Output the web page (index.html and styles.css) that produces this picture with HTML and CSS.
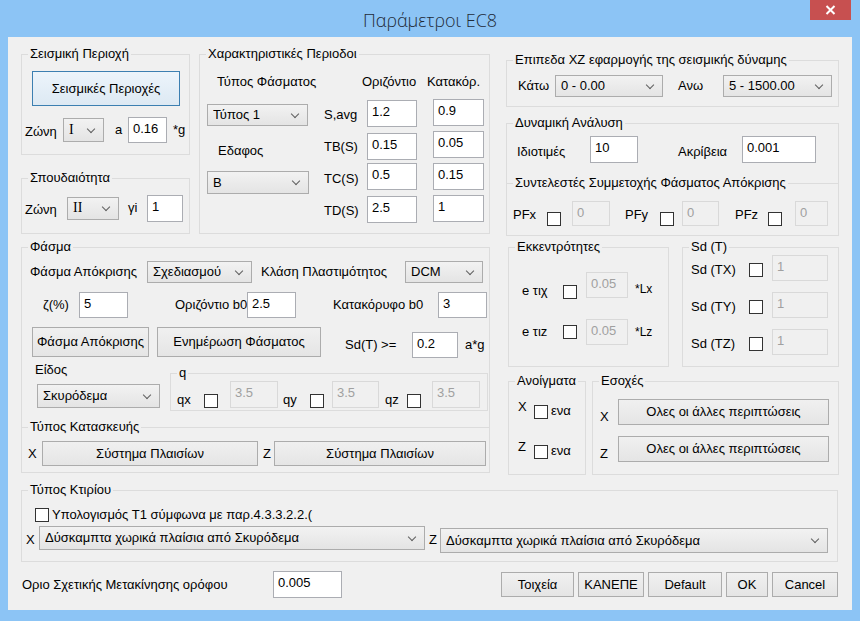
FILE: index.html
```html
<!DOCTYPE html>
<html lang="el">
<head>
<meta charset="utf-8">
<title>Παράμετροι EC8</title>
<link rel="stylesheet" href="styles.css">
</head>
<body>
<div class="window">
  <div class="titlebar">
    <div class="title">Παράμετροι EC8</div>
    <div class="close"><svg width="11" height="10" viewBox="0 0 11 10"><path d="M1.5 1 L9.5 9 M9.5 1 L1.5 9" stroke="#fff" stroke-width="2"/></svg></div>
  </div>
  <div class="client">
    <div class="upper">
      <div class="leftcol">
        <div class="row1">
          <div class="colA">
            <fieldset class="fs fs-seis">
              <legend>Σεισμική Περιοχή</legend>
              <div class="btn def w148 h35 btn-seis">Σεισμικές Περιοχές</div>
              <div class="r r-zoni1">
                <span class="pt4">Ζώνη</span>
                <div class="dd w41 h24 serif"><span>I</span></div>
                <span>a</span>
                <div class="tb w39 h26">0.16</div>
                <span class="ml3">*g</span>
              </div>
            </fieldset>
            <fieldset class="fs fs-spoud">
              <legend>Σπουδαιότητα</legend>
              <div class="r r-zoni2">
                <span class="pt4">Ζώνη</span>
                <div class="dd w52 h23 serif"><span>II</span></div>
                <span>γi</span>
                <div class="tb w36 h27">1</div>
              </div>
            </fieldset>
          </div>
          <fieldset class="fs fs-char">
            <legend>Χαρακτηριστικές Περιοδοι</legend>
            <div class="char-grid">
              <span class="hd pl10">Τύπος Φάσματος</span><span></span><span class="hd ml-5">Οριζόντιο</span><span class="hd ml-6">Κατακόρ.</span>
              <div class="dd w101 h22 as-e mb1"><span>Τύπος 1</span></div><span class="lb">S,avg</span><div class="tb w50 h27 mt1">1.2</div><div class="tb w51 h27">0.9</div>
              <span class="as-e pl11">Εδαφος</span><span class="lb">TB(S)</span><div class="tb w50 h27 mt2">0.15</div><div class="tb w51 h27">0.05</div>
              <div class="dd w102 h23 mt8 ovf"><span>B</span></div><span class="lb">TC(S)</span><div class="tb w50 h27">0.5</div><div class="tb w51 h27">0.15</div>
              <span></span><span class="lb">TD(S)</span><div class="tb w50 h27 mt1">2.5</div><div class="tb w51 h27">1</div>
            </div>
          </fieldset>
        </div>
        <fieldset class="fs fs-fasma">
          <legend>Φάσμα</legend>
          <div class="r r-f1">
            <span>Φάσμα Απόκρισης</span>
            <div class="dd w105 h22"><span>Σχεδιασμού</span></div>
            <span>Κλάση Πλαστιμότητος</span>
            <div class="dd w78 h22"><span>DCM</span></div>
          </div>
          <div class="r r-f2">
            <span>ζ(%)</span>
            <div class="tb w49 h26">5</div>
            <span>Οριζόντιο b0</span>
            <div class="tb w49 h26">2.5</div>
            <span>Κατακόρυφο b0</span>
            <div class="tb w49 h26">3</div>
          </div>
          <div class="r r-f3">
            <div class="btn w117 h30 as-s">Φάσμα Απόκρισης</div>
            <div class="btn w164 h30 as-s">Ενημέρωση Φάσματος</div>
            <span class="pt4">Sd(T) &gt;=</span>
            <div class="tb w46 h26 as-e">0.2</div>
            <span class="pt4">a*g</span>
          </div>
          <div class="r-f4">
            <div class="eidos">
              <span>Είδος</span>
              <div class="dd w123 h24"><span>Σκυρόδεμα</span></div>
            </div>
            <fieldset class="fs fs-q">
              <legend>q</legend>
              <div class="r r-q">
                <span>qx</span><div class="chk"></div><div class="tb dis w48 h27">3.5</div>
                <span>qy</span><div class="chk"></div><div class="tb dis w47 h27">3.5</div>
                <span>qz</span><div class="chk"></div><div class="tb dis w48 h27">3.5</div>
              </div>
            </fieldset>
          </div>
          <fieldset class="fs topline fs-kat">
            <legend>Τύπος Κατασκευής</legend>
            <div class="r r-kat">
              <span>X</span>
              <div class="btn w216 h25">Σύστημα Πλαισίων</div>
              <span>Z</span>
              <div class="btn w212 h25">Σύστημα Πλαισίων</div>
            </div>
          </fieldset>
        </fieldset>
      </div>
      <div class="rightcol">
        <fieldset class="fs fs-epip">
          <legend>Επιπεδα XZ εφαρμογής της σεισμικής δύναμης</legend>
          <div class="r r-e1">
            <span>Κάτω</span>
            <div class="dd w108 h22"><span>0 - 0.00</span></div>
            <span>Ανω</span>
            <div class="dd w109 h22"><span>5 - 1500.00</span></div>
          </div>
        </fieldset>
        <fieldset class="fs fs-dyn">
          <legend>Δυναμική Ανάλυση</legend>
          <div class="r r-d1">
            <span class="pt4">Ιδιοτιμές</span>
            <div class="tb w48 h27">10</div>
            <span class="pt4">Ακρίβεια</span>
            <div class="tb w74 h27">0.001</div>
          </div>
          <fieldset class="fs topline fs-pf">
            <legend>Συντελεστές Συμμετοχής Φάσματος Απόκρισης</legend>
            <div class="r r-pf">
              <span class="pb3">PFx</span><div class="chk"></div><div class="tb dis w38 h25">0</div>
              <span class="pb3">PFy</span><div class="chk"></div><div class="tb dis w37 h25">0</div>
              <span class="pb3">PFz</span><div class="chk"></div><div class="tb dis w33 h25">0</div>
            </div>
          </fieldset>
        </fieldset>
        <div class="rrow1">
          <fieldset class="fs fs-ekk">
            <legend>Εκκεντρότητες</legend>
            <div class="r r-k1">
              <span>e τιχ</span><div class="chk"></div><div class="tb dis w42 h26 as-s">0.05</div><span class="pb2 small">*Lx</span>
            </div>
            <div class="r r-k2">
              <span>e τιz</span><div class="chk"></div><div class="tb dis w42 h26">0.05</div><span class="small">*Lz</span>
            </div>
          </fieldset>
          <fieldset class="fs fs-sd">
            <legend>Sd (T)</legend>
            <div class="r r-s">
              <span class="pt3">Sd (TX)</span><div class="chk"></div><div class="tb dis w56 h26">1</div>
            </div>
            <div class="r r-s">
              <span class="pt3">Sd (TY)</span><div class="chk"></div><div class="tb dis w56 h26">1</div>
            </div>
            <div class="r r-s">
              <span class="pt3">Sd (TZ)</span><div class="chk"></div><div class="tb dis w56 h26">1</div>
            </div>
          </fieldset>
        </div>
        <div class="rrow2">
          <fieldset class="fs fs-an">
            <legend>Ανοίγματα</legend>
            <div class="r r-a">
              <span class="as-s">X</span><div class="chk"></div><span>ενα</span>
            </div>
            <div class="r r-a">
              <span class="as-s">Z</span><div class="chk"></div><span>ενα</span>
            </div>
          </fieldset>
          <fieldset class="fs fs-es">
            <legend>Εσοχές</legend>
            <div class="r r-es">
              <span>X</span><div class="btn w211 h26">Ολες οι άλλες περιπτώσεις</div>
            </div>
            <div class="r r-es">
              <span>Z</span><div class="btn w211 h26">Ολες οι άλλες περιπτώσεις</div>
            </div>
          </fieldset>
        </div>
      </div>
    </div>
    <fieldset class="fs fs-kt">
      <legend>Τύπος Κτιρίου</legend>
      <div class="r-kt1">
        <div class="chk"></div><span>Υπολογισμός Τ1 σύμφωνα με παρ.4.3.3.2.2.(</span>
      </div>
      <div class="r r-kt2">
        <span>X</span>
        <div class="dd w386 h24"><span>Δύσκαμπτα χωρικά πλαίσια από Σκυρόδεμα</span></div>
        <span>Z</span>
        <div class="dd w388 h25 mt2"><span>Δύσκαμπτα χωρικά πλαίσια από Σκυρόδεμα</span></div>
      </div>
    </fieldset>
    <div class="footer">
      <span class="foot-lbl">Οριο Σχετικής Μετακίνησης ορόφου</span>
      <div class="tb w69 h27">0.005</div>
      <div class="spacer"></div>
      <div class="btns">
        <div class="btn w73 h25">Τοιχεία</div>
        <div class="btn w66 h25">ΚΑΝΕΠΕ</div>
        <div class="btn w74 h25">Default</div>
        <div class="btn w42 h25">OK</div>
        <div class="btn w66 h25">Cancel</div>
      </div>
    </div>
  </div>
</div>
</body>
</html>
```

FILE: styles.css
```css
* { box-sizing: border-box; }
html, body { margin: 0; padding: 0; }
body {
  font-family: "Liberation Sans", Arial, sans-serif;
  font-size: 13px;
  line-height: 16px;
  color: #000;
  background: #8cc4f5;
}
.window {
  width: 860px;
  height: 621px;
  background: #8cc4f5;
  display: flex;
  flex-direction: column;
  overflow: hidden;
}
.titlebar {
  height: 37px;
  flex: none;
  display: grid;
  grid-template-columns: 1fr auto 1fr;
}
.title {
  grid-column: 2;
  font-family: "Open Sans", "Noto Sans", sans-serif;
  font-weight: 300;
  font-size: 18px;
  line-height: 22px;
  margin-top: 9px;
  color: #1f2b38;
}
.close {
  grid-column: 3;
  justify-self: end;
  width: 41px;
  height: 20px;
  margin-right: 9px;
  background: #c75050;
  display: flex;
  align-items: center;
  justify-content: center;
}
.client {
  margin: 0 8px;
  height: 573px;
  flex: none;
  background: #f0f0f0;
  padding: 0 13px;
  display: flex;
  flex-direction: column;
}

/* group boxes */
fieldset.fs {
  margin: 0;
  padding: 0;
  border: 1px solid #dcdcdc;
  min-width: 0;
}
.fs > legend {
  margin-left: 6px;
  padding: 0 2px;
  line-height: 16px;
  font-size: 13px;
}
fieldset.fs.topline { border-width: 1px 0 0 0; }

/* controls */
.tb {
  background: #fff;
  border: 1px solid #abadb3;
  padding: 3px 4px 0;
  white-space: nowrap;
  overflow: hidden;
}
.tb.dis {
  background: #f0f0f0;
  border-color: #d9d9d9;
  color: #a0a0a0;
}
.dd {
  display: flex;
  align-items: center;
  background: linear-gradient(#f2f2f2, #e4e4e4);
  border: 1px solid #acacac;
  padding-left: 5px;
  white-space: nowrap;
}
.dd > span { overflow: hidden; }
.dd::after {
  content: "";
  flex: none;
  width: 5px;
  height: 5px;
  border: solid #5f5f5f;
  border-width: 0 1.5px 1.5px 0;
  transform: rotate(45deg);
  margin: -3px 9px 0 auto;
}
.serif { font-family: "Liberation Serif", "Times New Roman", serif; font-size: 14px; }
.btn {
  display: flex;
  align-items: center;
  justify-content: center;
  border: 1px solid #acacac;
  background: linear-gradient(#f0f0f0, #e5e5e5);
  white-space: nowrap;
}
.btn.def { border-color: #3c7fb1; background: linear-gradient(#ecf4fb, #dde9f3); }
.chk {
  width: 14px;
  height: 14px;
  border: 1px solid #333;
  background: #fff;
}

/* sizes */
.w33 { width: 33px; } .w36 { width: 36px; } .w37 { width: 37px; } .w38 { width: 38px; }
.w39 { width: 39px; } .w41 { width: 41px; } .w42 { width: 42px; } .w46 { width: 46px; }
.w47 { width: 47px; } .w48 { width: 48px; } .w49 { width: 49px; } .w50 { width: 50px; }
.w51 { width: 51px; } .w52 { width: 52px; } .w56 { width: 56px; } .w66 { width: 66px; }
.w69 { width: 69px; } .w73 { width: 73px; } .w74 { width: 74px; } .w78 { width: 78px; }
.w101 { width: 101px; } .w102 { width: 102px; } .w105 { width: 105px; } .w108 { width: 108px; }
.w109 { width: 109px; } .w117 { width: 117px; } .w123 { width: 123px; } .w148 { width: 148px; }
.w164 { width: 164px; } .w211 { width: 211px; } .w212 { width: 212px; } .w216 { width: 216px; }
.w386 { width: 386px; } .w388 { width: 388px; }
.h22 { height: 22px; } .h23 { height: 23px; } .h24 { height: 24px; } .h25 { height: 25px; }
.h26 { height: 26px; } .h27 { height: 27px; } .h30 { height: 30px; } .h35 { height: 35px; }

/* helpers */
.as-s { align-self: start; } .as-e { align-self: end; } .as-c { align-self: center; }
.mt1 { margin-top: 1px; } .mt2 { margin-top: 2px; } .mt8 { margin-top: 8px; } .mb1 { margin-bottom: 1px; }
.ml3 { margin-left: 3px; } .ml-5 { margin-left: -5px; } .ml-6 { margin-left: -6px; }
.pl10 { padding-left: 10px; } .pl11 { padding-left: 11px; }
.pt3 { padding-top: 3px; } .pt4 { padding-top: 4px; } .pb2 { padding-bottom: 2px; } .pb3 { padding-bottom: 3px; }
.small { font-size: 12px; }
.ovf { position: relative; z-index: 1; }

.r {
  display: grid;
  align-items: center;
  white-space: nowrap;
}

/* layout */
.upper { display: flex; align-items: flex-start; flex: none; }
.leftcol { width: 469px; margin-top: 9px; }
.row1 { display: flex; gap: 9px; }
.colA { width: 169px; display: flex; flex-direction: column; }
.fs-seis { height: 109px; }
.btn-seis { margin: 9px 0 0 10px; }
.r-zoni1 { margin-top: 11px; padding-left: 3px; grid-template-columns: 38px 52px 13px 42px auto; height: 26px; }
.fs-spoud { margin-top: 15px !important; height: 64px; }
.r-zoni2 { margin-top: 8px; padding-left: 3px; grid-template-columns: 42px 61px 19px auto; height: 28px; }

.fs-char { width: 291px; height: 188px; }
.char-grid {
  display: grid;
  margin-top: 8px;
  padding-left: 7px;
  grid-template-columns: 117px 43px 66px auto;
  grid-template-rows: 25px 28px 28px 28px 28px;
  row-gap: 4px;
  align-items: start;
  white-space: nowrap;
}
.hd { margin-top: 4px; }
.lb { align-self: center; padding-top: 3px; }

.fs-fasma { margin-top: 5px !important; height: 234px; }
.r-f1 { margin-top: 6px; padding-left: 8px; grid-template-columns: 117px 114px 144px auto; height: 22px; }
.r-f2 { margin-top: 9px; padding-left: 21px; grid-template-columns: 36px 96px 72px 86px 105px auto; height: 26px; }
.r-f3 { margin-top: 9px; padding-left: 10px; grid-template-columns: 125px 188px 67px 53px auto; height: 31px; }
.r-f4 { display: flex; align-items: flex-start; margin-top: 4px; }
.eidos { margin-left: 13px; width: 125px; display: flex; flex-direction: column; align-items: flex-start; }
.eidos .dd { margin: 6px 0 0 2px; }
.fs-q { margin: 3px 0 0 10px !important; width: 318px; height: 46px; }
.r-q { padding-left: 6px; grid-template-columns: 27px 26px 53px 27px 22px 53px 22px 25px auto; height: 27px; align-items: end; }
.fs-kat { margin-top: 8px !important; }
.r-kat { margin-top: 6px; padding-left: 6px; grid-template-columns: 14px 221px 11px auto; height: 25px; }

.rightcol { width: 333px; margin-left: 16px; margin-top: 15px; }
.fs-epip { height: 55px; }
.r-e1 { margin-top: 7px; padding-left: 11px; grid-template-columns: 37px 123px 45px auto; height: 22px; }
.fs-dyn { margin-top: 8px !important; height: 121px; }
.r-d1 { margin-top: 5px; padding-left: 10px; grid-template-columns: 73px 88px 64px auto; height: 27px; }
.fs-pf { margin-top: 12px !important; }
.r-pf { margin-top: 10px; padding-left: 6px; grid-template-columns: 34px 25px 53px 35px 22px 53px 33px 27px auto; height: 25px; align-items: end; }

.rrow1 { display: flex; margin: 3px 0 0 2px; }
.fs-ekk { width: 161px; height: 128px; }
.r-k1 { margin-top: 17px; padding-left: 13px; grid-template-columns: 41px 23px 49px auto; height: 27px; align-items: end; }
.r-k2 { margin-top: 19px; padding-left: 13px; grid-template-columns: 41px 23px 49px auto; height: 27px; }
.fs-sd { width: 157px; height: 128px; margin-left: 13px !important; }
.r-s { padding-left: 8px; grid-template-columns: 58px 23px auto; height: 26px; align-items: center; }
.r-s .chk { margin-top: 4px; }
.r-s + .r-s { margin-top: 11px; }

.rrow2 { display: flex; margin: 6px 0 0 2px; }
.fs-an { width: 78px; height: 102px; }
.r-a { margin-top: 10px; padding-left: 9px; grid-template-columns: 16px 17px auto; height: 20px; align-items: end; }
.r-a + .r-a { margin-top: 20px; }
.fs-es { width: 247px; height: 102px; margin-left: 6px !important; }
.r-es { margin-top: 10px; padding-left: 7px; grid-template-columns: 18px auto; height: 26px; align-items: end; }
.r-es + .r-es { margin-top: 11px; }

.fs-kt { margin-top: 7px !important; width: 817px; height: 80px; flex: none; }
.r-kt1 { margin-top: 9px; padding-left: 13px; display: flex; align-items: center; gap: 3px; height: 15px; }
.r-kt2 { margin-top: 4px; padding-left: 4px; grid-template-columns: 13px 390px 11px auto; height: 24px; align-items: start; }
.r-kt2 > span { align-self: center; }

.footer { margin-top: 9px; display: flex; align-items: center; flex: none; }
.foot-lbl { width: 252px; padding-left: 1px; }
.spacer { flex: 1; }
.btns { display: flex; gap: 4px; margin-right: 1px; }
```
